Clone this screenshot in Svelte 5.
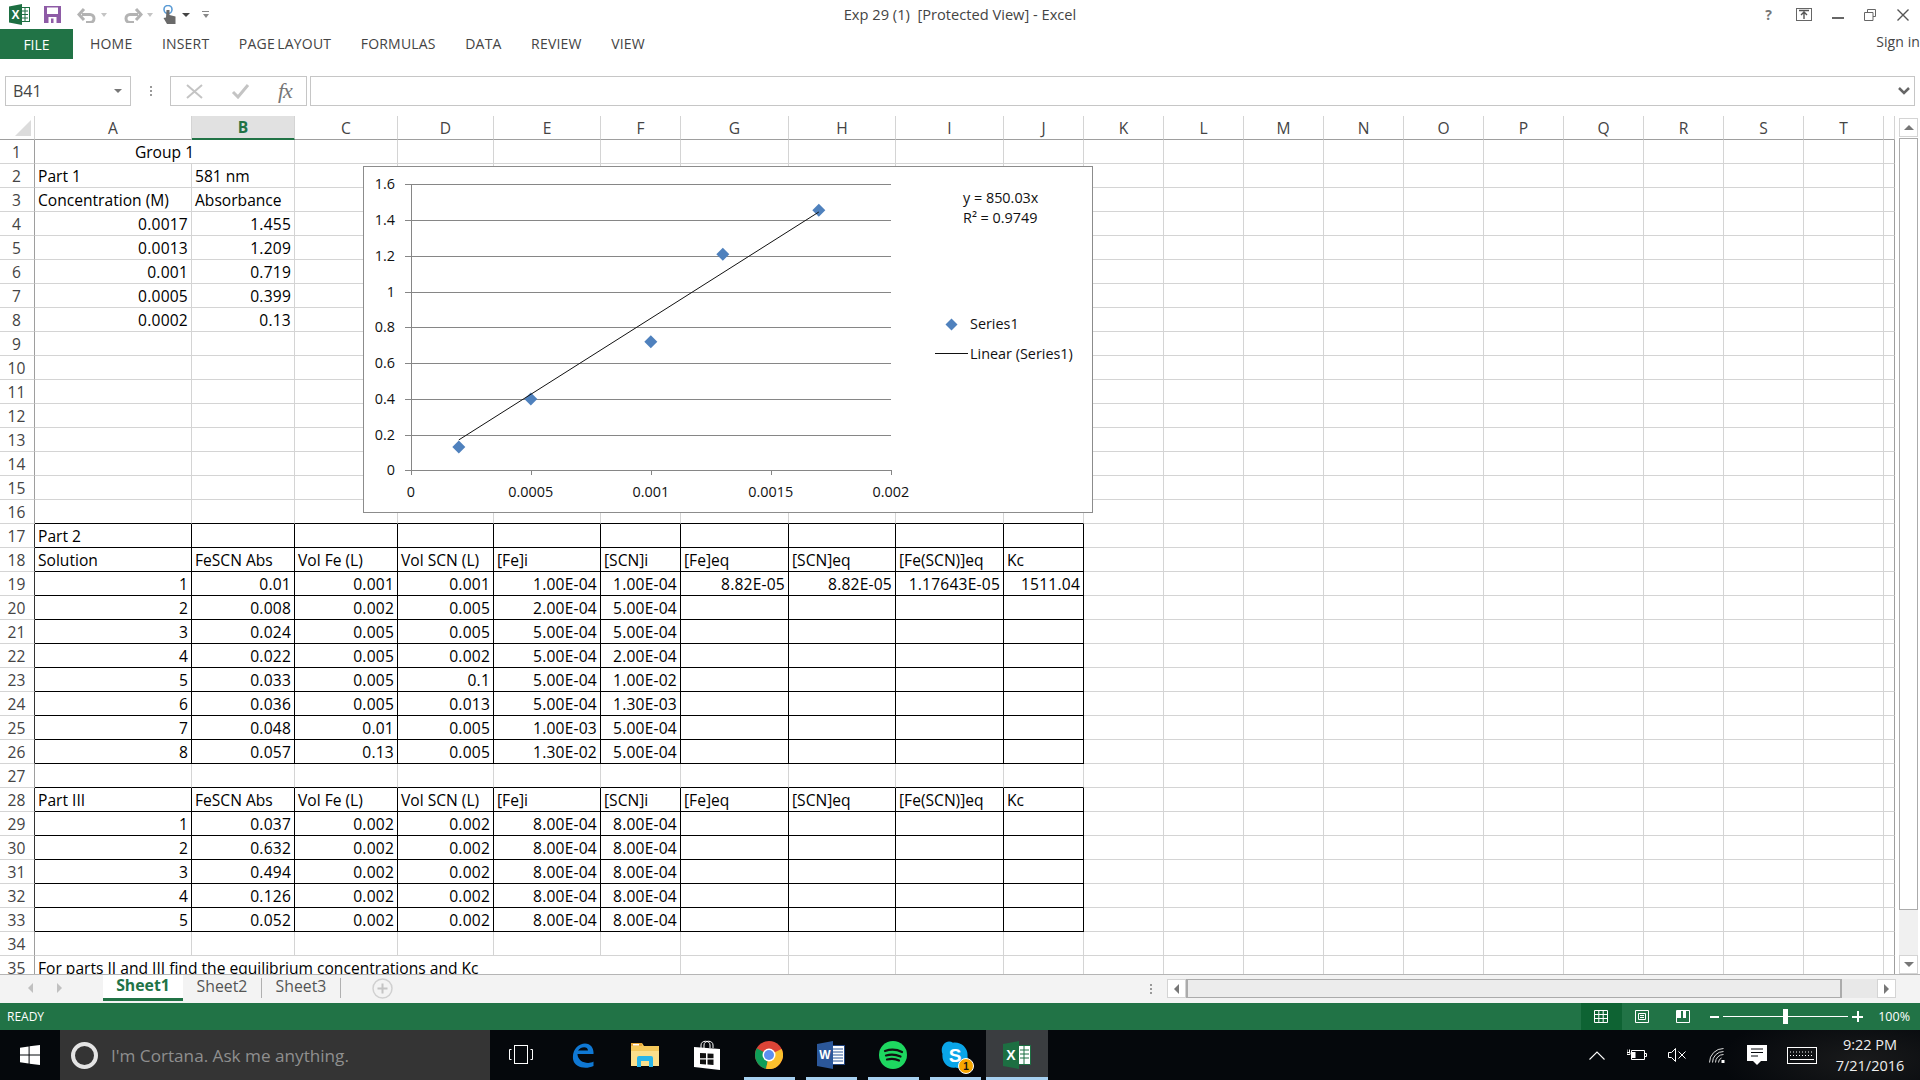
<script>
	const colWidths = [157, 103, 103, 96, 107, 80, 108, 107, 108, 80, 80, 80, 80, 80, 80, 80, 80, 80, 80, 80, 11];
	const letters = 'ABCDEFGHIJKLMNOPQRST'.split('').concat('');
	const gridCols = '35px ' + colWidths.map((w) => w + 'px').join(' ');

	const partHead = ['FeSCN Abs', 'Vol Fe (L)', 'Vol SCN (L)', '[Fe]i', '[SCN]i', '[Fe]eq', '[SCN]eq', '[Fe(SCN)]eq', 'Kc'];

	const data = {
		2: ['Part 1', '581 nm'],
		3: ['Concentration (M)', 'Absorbance'],
		4: ['0.0017', '1.455'],
		5: ['0.0013', '1.209'],
		6: ['0.001', '0.719'],
		7: ['0.0005', '0.399'],
		8: ['0.0002', '0.13'],
		17: ['Part 2'],
		18: ['Solution', ...partHead],
		19: ['1', '0.01', '0.001', '0.001', '1.00E-04', '1.00E-04', '8.82E-05', '8.82E-05', '1.17643E-05', '1511.04'],
		20: ['2', '0.008', '0.002', '0.005', '2.00E-04', '5.00E-04'],
		21: ['3', '0.024', '0.005', '0.005', '5.00E-04', '5.00E-04'],
		22: ['4', '0.022', '0.005', '0.002', '5.00E-04', '2.00E-04'],
		23: ['5', '0.033', '0.005', '0.1', '5.00E-04', '1.00E-02'],
		24: ['6', '0.036', '0.005', '0.013', '5.00E-04', '1.30E-03'],
		25: ['7', '0.048', '0.01', '0.005', '1.00E-03', '5.00E-04'],
		26: ['8', '0.057', '0.13', '0.005', '1.30E-02', '5.00E-04'],
		28: ['Part III', ...partHead],
		29: ['1', '0.037', '0.002', '0.002', '8.00E-04', '8.00E-04'],
		30: ['2', '0.632', '0.002', '0.002', '8.00E-04', '8.00E-04'],
		31: ['3', '0.494', '0.002', '0.002', '8.00E-04', '8.00E-04'],
		32: ['4', '0.126', '0.002', '0.002', '8.00E-04', '8.00E-04'],
		33: ['5', '0.052', '0.002', '0.002', '8.00E-04', '8.00E-04']
	};

	const rowNums = Array.from({ length: 35 }, (_, i) => i + 1);
	const isBoxedRow = (r) => (r >= 17 && r <= 26) || (r >= 28 && r <= 33);
	const isBoxTop = (r) => r === 16 || r === 27;
	const isNum = (t) => /^[\d.]+(E-\d+)?$/.test(t);

	function cellClass(r, c) {
		const t = (data[r] || [])[c] || '';
		let cls = 'cell';
		if (isNum(t)) cls += ' num';
		if (c < 10 && (isBoxedRow(r) || isBoxTop(r))) cls += isBoxedRow(r) ? ' boxed' : ' boxtop';
		if (c === colWidths.length - 1) cls += ' edge';
		return cls;
	}

	// chart helpers, page coordinates (the svg viewBox starts at the chart corner)
	const px = (x) => 410.8 + (x / 0.002) * 480;
	const py = (y) => 470.3 - (y / 1.6) * 286;
	const yTicks = ['0', '0.2', '0.4', '0.6', '0.8', '1', '1.2', '1.4', '1.6'];
	const xTicks = ['0', '0.0005', '0.001', '0.0015', '0.002'];
	const points = [
		[0.0017, 1.455],
		[0.0013, 1.209],
		[0.001, 0.719],
		[0.0005, 0.399],
		[0.0002, 0.13]
	];
	const diamond = (x, y, s = 6.5) => `${x},${y - s} ${x + s},${y} ${x},${y + s} ${x - s},${y}`;
</script>

<div class="app">
	<header class="titlebar">
		<div class="qat">
			<svg class="q-excel" width="21" height="21" viewBox="0 0 21 21">
				<rect x="11" y="3.5" width="9.5" height="14" fill="#fff" stroke="#1d6f42" />
				<path d="M13 7h6M13 10.5h6M13 14h6M16 4v13" stroke="#1d6f42" stroke-width="1" />
				<path d="M0 2.5 13 0v21L0 18.5z" fill="#1d6f42" />
				<text x="6.4" y="15" class="logo-letter" font-size="12">X</text>
			</svg>
			<svg class="q-save" width="17" height="17" viewBox="0 0 17 17">
				<path d="M0 0h17v17H0z" fill="#8e5ba6" />
				<rect x="3" y="1.5" width="11" height="6.5" fill="#fff" />
				<rect x="4.5" y="11" width="8" height="6" fill="#fff" />
				<rect x="7" y="12.5" width="2.5" height="4.5" fill="#8e5ba6" />
			</svg>
			<svg class="q-undo" width="20" height="16" viewBox="0 0 20 16">
				<path d="M5 7.5h8a4 4 0 0 1 0 8H9M7 2 2 7.5 7 13" fill="none" stroke="#b3b3b3" stroke-width="3" />
			</svg>
			<span class="caret small"></span>
			<svg class="q-redo" width="20" height="16" viewBox="0 0 20 16">
				<path d="M15 7.5H7a4 4 0 0 0 0 8h4M13 2l5 5.5-5 5.5" fill="none" stroke="#b3b3b3" stroke-width="3" />
			</svg>
			<span class="caret small"></span>
			<svg class="q-touch" width="14" height="19" viewBox="0 0 14 19">
				<circle cx="5" cy="4.5" r="4" fill="none" stroke="#5b9bd5" stroke-width="1.6" />
				<path d="M3.5 5h3v5l6 1.5V19H4l-3.500-6 2.500-.5z" fill="#6a6a6a" />
			</svg>
			<span class="caret dark"></span>
			<span class="customize"><i></i><span class="caret tiny"></span></span>
		</div>
		<div class="doc-title">Exp 29 (1)&nbsp; [Protected View] - Excel</div>
		<div class="winctl">
			<span class="help">?</span>
			<svg width="16" height="13" viewBox="0 0 16 13">
				<rect x=".5" y=".5" width="15" height="12" fill="none" stroke="#666" />
				<path d="M3 2.500h10M8 11V4.500M5 7l3-3 3 3" fill="none" stroke="#555" stroke-width="1.400" />
			</svg>
			<svg width="12" height="12" viewBox="0 0 12 12"><rect y="8" width="12" height="2" fill="#666" /></svg>
			<svg width="12" height="12" viewBox="0 0 12 12">
				<path d="M3.500 3V.5h8v7H9M.5 3.500h8.500v8H.5z" fill="#fff" stroke="#666" />
			</svg>
			<svg class="close" width="12" height="12" viewBox="0 0 12 12"><path d="M.5.5l11 11M11.500.5l-11 11" stroke="#555" stroke-width="1.400" /></svg>
		</div>
	</header>

	<nav class="ribbon">
		<div class="file">FILE</div>
		<div class="ribbon-tabs">
			{#each ['HOME', 'INSERT', 'PAGE LAYOUT', 'FORMULAS', 'DATA', 'REVIEW', 'VIEW'] as tab}
				<span>{tab}</span>
			{/each}
		</div>
		<div class="signin">Sign in</div>
	</nav>

	<div class="formula-bar">
		<div class="namebox"><span>B41</span><span class="caret"></span></div>
		<div class="dots"><i></i><i></i><i></i></div>
		<div class="fx-box">
			<svg width="17" height="15" viewBox="0 0 17 15"><path d="M1 1l15 13M16 1 1 14" stroke="#c4c4c4" stroke-width="2" /></svg>
			<svg width="19" height="15" viewBox="0 0 19 15"><path d="M2 8l5 5L17 1" fill="none" stroke="#c4c4c4" stroke-width="3" /></svg>
			<span class="fx">fx</span>
		</div>
		<div class="formula-input"><svg width="12" height="8" viewBox="0 0 12 8"><path d="M1 1l5 5 5-5" fill="none" stroke="#666" stroke-width="2.500" /></svg></div>
	</div>

	<div class="sheet-area">
		<div class="sheet" style="grid-template-columns: {gridCols}">
			<div class="corner"><i></i></div>
			{#each letters as l}
				<div class="colhead" class:selected={l === 'B'}>{l}</div>
			{/each}

			{#each rowNums as r}
				<div class="rownum" class:black={isBoxedRow(r)}>{r}</div>
				{#if r === 1}
					<div class="cell merged" style="grid-column: span 2">Group 1</div>
					{#each colWidths.slice(2) as _, i}
						<div class={cellClass(r, i + 2)}></div>
					{/each}
				{:else if r === 35}
					<div class="cell overflow" style="grid-column: span 5">For parts II and III find the equilibrium concentrations and Kc</div>
					{#each colWidths.slice(5) as _, i}
						<div class={cellClass(r, i + 5)}></div>
					{/each}
				{:else}
					{#each colWidths as _, c}
						<div class={cellClass(r, c)}>{(data[r] || [])[c] || ''}</div>
					{/each}
				{/if}
			{/each}

			<div class="chart">
				<svg width="730" height="347" viewBox="363 166 730 347">
					{#each yTicks as t, i}
						<line x1="405" x2="891" y1={Math.round(py(i * 0.2)) + 0.5} y2={Math.round(py(i * 0.2)) + 0.5} stroke="#868686" />
						<text x="395" y={py(i * 0.2) + 5} text-anchor="end" class="lbl">{t}</text>
					{/each}
					<line x1="411.500" x2="411.500" y1="184" y2="475" stroke="#868686" />
					{#each xTicks as t, i}
						<line x1={Math.round(px(i * 0.0005)) + 0.5} x2={Math.round(px(i * 0.0005)) + 0.5} y1="470" y2="475" stroke="#868686" />
						<text x={px(i * 0.0005)} y="497" text-anchor="middle" class="lbl">{t}</text>
					{/each}
					{#each points as [x, y]}
						<polygon points={diamond(px(x), py(y))} fill="#4f81bd" />
					{/each}
					<line x1={px(0.0002)} y1={py(0.17)} x2={px(0.0017)} y2={py(1.445)} stroke="#111" stroke-width="1" />
					<text x="963" y="203" class="lbl">y = 850.03x</text>
					<text x="963" y="223" class="lbl">R² = 0.9749</text>
					<polygon points={diamond(951.500, 324.500, 6)} fill="#4f81bd" />
					<text x="970" y="329" class="lbl">Series1</text>
					<line x1="935" x2="968" y1="353.500" y2="353.500" stroke="#111" />
					<text x="970" y="359" class="lbl">Linear (Series1)</text>
				</svg>
			</div>
		</div>

		<div class="vscroll">
			<div class="sbtn"><span class="tri up"></span></div>
			<div class="vthumb"></div>
			<div class="vtrack"></div>
			<div class="sbtn"><span class="tri down"></span></div>
		</div>
	</div>

	<div class="tabs-bar">
		<div class="tab-nav"><span class="tri left"></span><span class="tri right"></span></div>
		<div class="tab active">Sheet1</div>
		<div class="tab">Sheet2</div>
		<div class="tab">Sheet3</div>
		<div class="add">
			<svg width="21" height="21" viewBox="0 0 21 21">
				<circle cx="10.500" cy="10.500" r="9.500" fill="none" stroke="#d0d0d0" stroke-width="1.500" />
				<path d="M10.500 5.500v10M5.500 10.500h10" stroke="#c4c4c4" stroke-width="2" />
			</svg>
		</div>
		<div class="split-dots"><i></i><i></i><i></i></div>
		<div class="hscroll">
			<div class="sbtn"><span class="tri left dark"></span></div>
			<div class="hthumb"></div>
			<div class="htrack"></div>
			<div class="sbtn"><span class="tri right dark"></span></div>
		</div>
	</div>

	<div class="statusbar">
		<span class="ready">READY</span>
		<div class="status-right">
			<div class="view on">
				<svg width="14" height="13" viewBox="0 0 14 13"><path d="M.5.500h13v12H.5zM.5 4.500h13M.5 8.500h13M4.800.5v12M9.200.5v12" fill="none" stroke="#fff" /></svg>
			</div>
			<div class="view">
				<svg width="14" height="13" viewBox="0 0 14 13"><path d="M.5.500h13v12H.5z" fill="none" stroke="#fff" /><path d="M3.500 3.500h7v6h-7zM5 5.500h4M5 7.500h4" fill="none" stroke="#fff" /></svg>
			</div>
			<div class="view">
				<svg width="14" height="13" viewBox="0 0 14 13"><path d="M.5.500h13v12H.5z" fill="none" stroke="#fff" /><rect x="1" y="1" width="4" height="7" fill="#fff" /><rect x="7" y="1" width="3" height="7" fill="#fff" /></svg>
			</div>
			<div class="zoom">
				<span class="zbtn"><i></i></span>
				<div class="zline"><b></b></div>
				<span class="zbtn plus"><i></i></span>
			</div>
			<span class="pct">100%</span>
		</div>
	</div>

	<footer class="taskbar">
		<div class="start">
			<svg width="20" height="20" viewBox="0 0 20 20"><path d="M0 2.800 8.600 1.500v8H0zM9.600 1.300 20 0v9.500H9.600zM0 10.500h8.600v8L0 17.200zM9.600 10.500H20V20L9.600 18.700z" fill="#fff" /></svg>
		</div>
		<div class="cortana">
			<span class="ring"></span>
			<span>I'm Cortana. Ask me anything.</span>
		</div>
		<div class="slot">
			<svg width="24" height="20" viewBox="0 0 24 20"><rect x="5.500" y=".5" width="13" height="18" fill="none" stroke="#fff" /><path d="M2.500 4.500H.5v10h2M21.500 4.500h2v10h-2" fill="none" stroke="#fff" /></svg>
		</div>
		<div class="slot">
			<svg width="25" height="28" viewBox="0 0 25 28">
				<path d="M2 18C1 8 8 2.500 14 2.500c6 0 9 5 8.500 10.500H6.500C6.500 21 17 24 22.500 20.500V25C14 29 3 26 2 18zM7 9.500h10C17 5 10 5 7 9.500z" fill="#0f78d4" />
			</svg>
		</div>
		<div class="slot">
			<svg width="28" height="24" viewBox="0 0 28 24">
				<path d="M0 0h11l2 3h15v20H0z" fill="#f5c95c" />
				<path d="M0 0h11v3H0z" fill="#e8a93a" />
				<rect x="2" y="1" width="6" height="1.500" fill="#fff" />
				<path d="M0 8h28v15H0z" fill="#fbe08c" />
				<path d="M6 24V15q0-2 2-2h12q2 0 2 2v9h-4v-6H10v6z" fill="#29b6ea" />
			</svg>
		</div>
		<div class="slot">
			<svg width="26" height="30" viewBox="0 0 26 30">
				<path d="M7 8V5c0-5 9-5 9 0v3M10 8V5c0-5 9-5 9 0v3" fill="none" stroke="#fff" stroke-width="1" />
				<path d="M0 7l26 2v21L0 27z" fill="#fff" />
				<path d="M6 13l6 .3v5H6zM13.500 13.400l6 .3v4.600h-6zM6 19.500h6v5L6 24zM13.500 19.500h6v5.500l-6-.5z" fill="#111" />
			</svg>
		</div>
		<div class="slot running">
			<svg width="28" height="28" viewBox="0 0 28 28">
				<circle cx="14" cy="14" r="14" fill="#db4437" />
				<path d="M14 14 1.800 7.200A14 14 0 0 0 11 27.700z" fill="#0f9d58" />
				<path d="M14 14 26.600 8A14 14 0 0 1 11 27.700z" fill="#fbc02d" />
				<circle cx="14" cy="14" r="6.500" fill="#fff" />
				<circle cx="14" cy="14" r="5" fill="#5d8ff0" />
			</svg>
		</div>
		<div class="slot running">
			<svg width="28" height="28" viewBox="0 0 28 28">
				<rect x="11" y="4.500" width="16.500" height="19" fill="#fff" stroke="#23457f" />
				<path d="M16 8h10M16 11h10M16 14h10M16 17h10M16 20h10" stroke="#2b579a" />
				<path d="M0 3 16 0v28L0 25z" fill="#2b579a" />
				<text x="7.800" y="18" class="logo-letter" font-size="12">W</text>
			</svg>
		</div>
		<div class="slot running">
			<svg width="28" height="28" viewBox="0 0 28 28">
				<circle cx="14" cy="14" r="14" fill="#1ed760" />
				<path d="M6 10c6-2 12-1.500 17 1M7 14.500c5-1.500 10-1 14.500 1M8 18.500c4-1 8.500-.8 12 1" fill="none" stroke="#111" stroke-width="2.200" stroke-linecap="round" />
			</svg>
		</div>
		<div class="slot running">
			<div class="skype">
				<svg width="28" height="28" viewBox="0 0 28 28">
					<path d="M8 .5a7.500 7.500 0 0 1 4 1.200C20 .5 27.500 7 26.500 15.500 28.500 22 22 29 14.500 26.500 7 28 .5 21 1.500 13 -1 7 3 .5 8 .5z" fill="#0aa5e8" />
					<text x="14" y="21" class="logo-letter" font-size="19" font-weight="700">S</text>
				</svg>
				<span class="badge">1</span>
			</div>
		</div>
		<div class="slot excel-on">
			<svg width="28" height="28" viewBox="0 0 28 28">
				<rect x="15" y="4.500" width="12.500" height="19" fill="#fff" stroke="#1d6f42" />
				<path d="M17 9h9M17 13h9M17 17h9M21 5v18" stroke="#1d6f42" />
				<path d="M0 3 16 0v28L0 25z" fill="#1d6f42" />
				<text x="8" y="19" class="logo-letter" font-size="14">X</text>
			</svg>
		</div>
		<div class="tray">
			<div class="tslot">
				<svg width="16" height="9" viewBox="0 0 16 9"><path d="M.5 8.500 8 1l7.500 7.500" fill="none" stroke="#fff" stroke-width="1.100" /></svg>
			</div>
			<div class="tslot">
				<svg width="20" height="12" viewBox="0 0 20 12">
					<path d="M4.500 1.500h13v9h-13zM17.500 4.500h2v3h-2" fill="none" stroke="#fff" />
					<rect x="5" y="3" width="3.500" height="6" fill="#fff" />
					<path d="M0 .5v3M2.500.5v3M0 3.500h3v2H0z" stroke="#fff" />
				</svg>
			</div>
			<div class="tslot">
				<svg width="18" height="14" viewBox="0 0 18 14"><path d="M.5 4.500h3l4-4v13l-4-4h-3zM10.500 3.500l7 7M17.500 3.500l-7 7" fill="none" stroke="#fff" /></svg>
			</div>
			<div class="tslot">
				<svg width="16" height="15" viewBox="0 0 16 15">
					<path d="M.5 14.500A14 14 0 0 1 14.500.5M3.500 14.500A11 11 0 0 1 14.500 3.500M6.500 14.500a8 8 0 0 1 8-8M9.500 14.500a5 5 0 0 1 3-4.500" fill="none" stroke="#ddd" stroke-width="1" />
					<rect x="12.500" y="12" width="3" height="3" fill="#fff" />
				</svg>
			</div>
			<div class="tslot">
				<svg width="20" height="20" viewBox="0 0 20 20">
					<path d="M0 0h20v16h-6l-4 4-4-4H0z" fill="#fff" />
					<path d="M4 4h12M4 7.500h12M4 11h7" stroke="#05080c" stroke-width="1" />
				</svg>
			</div>
			<div class="tslot wide">
				<svg width="30" height="17" viewBox="0 0 30 17">
					<rect x=".5" y=".5" width="29" height="16" fill="none" stroke="#fff" />
					<path d="M3 5h24M3 8.500h24" stroke="#fff" stroke-dasharray="1 2" />
					<path d="M3 12.500h24" stroke="#fff" />
				</svg>
			</div>
			<div class="clock"><span>9:22 PM</span><span>7/21/2016</span></div>
		</div>
	</footer>
</div>

<style>
	:global(body) {
		margin: 0;
		background: #fff;
	}

	.app {
		width: 1920px;
		height: 1080px;
		display: flex;
		flex-direction: column;
		overflow: hidden;
		font-family: 'Open Sans', 'Liberation Sans', sans-serif;
		color: #444;
		background: #fff;
	}

	/* title row */
	.titlebar {
		height: 29px;
		flex: none;
		display: grid;
		grid-template-columns: 1fr auto 1fr;
		align-items: center;
	}

	.qat {
		display: flex;
		align-items: center;
		padding-left: 9px;
	}

	.q-save {
		margin-left: 14px;
	}

	.q-undo {
		margin-left: 16px;
	}

	.q-redo {
		margin-left: 16px;
	}

	.q-touch {
		margin-left: 10px;
	}

	.caret {
		width: 0;
		height: 0;
		display: inline-block;
		border-left: 4px solid transparent;
		border-right: 4px solid transparent;
		border-top: 4px solid #777;
	}

	.caret.small {
		margin-left: 4px;
		border-top-color: #c4c4c4;
		border-left-width: 3.5px;
		border-right-width: 3.5px;
	}

	.caret.dark {
		margin-left: 5px;
		border-top-color: #444;
	}

	.customize {
		margin-left: 12px;
		display: flex;
		flex-direction: column;
		gap: 2px;
		align-items: center;
	}

	.customize i {
		width: 7px;
		height: 1px;
		background: #888;
	}

	.caret.tiny {
		border-left-width: 3px;
		border-right-width: 3px;
		border-top-color: #888;
	}

	.doc-title {
		font-size: 14.650px;
		color: #444;
		padding-bottom: 2px;
	}

	.winctl {
		display: flex;
		align-items: center;
		justify-content: flex-end;
		padding-right: 11px;
		gap: 20px;
	}

	.winctl .close {
		margin-left: 1px;
	}

	.help {
		font-weight: 700;
		font-size: 14px;
		color: #777;
		margin-right: 4px;
	}

	/* ribbon */
	.ribbon {
		height: 30px;
		flex: none;
		display: flex;
		align-items: center;
		font-size: 14px;
	}

	.file {
		width: 73px;
		height: 30px;
		background: #217346;
		color: #fff;
		display: flex;
		align-items: center;
		justify-content: center;
	}

	.ribbon-tabs {
		display: flex;
		gap: 29.500px;
		margin-left: 17px;
		margin-top: -2px;
		letter-spacing: 0.2px;
		word-spacing: -1.500px;
		color: #444;
	}

	.signin {
		margin-left: auto;
		margin-top: -5px;
		letter-spacing: 0.1px;
	}

	/* formula bar */
	.formula-bar {
		height: 30px;
		margin-top: 17px;
		flex: none;
		display: flex;
		align-items: stretch;
		padding-left: 5px;
		padding-right: 5px;
	}

	.namebox {
		width: 126px;
		border: 1px solid #c6c6c6;
		display: flex;
		align-items: center;
		justify-content: space-between;
		padding: 0 8px 0 7px;
		font-size: 16px;
		box-sizing: border-box;
	}

	.dots {
		width: 39px;
		display: flex;
		flex-direction: column;
		align-items: center;
		justify-content: center;
		gap: 2px;
	}

	.dots i,
	.split-dots i {
		width: 2px;
		height: 2px;
		background: #999;
	}

	.fx-box {
		width: 137px;
		box-sizing: border-box;
		border: 1px solid #c6c6c6;
		display: flex;
		align-items: center;
		padding-left: 15px;
		gap: 28px;
	}

	.fx {
		font-family: 'Liberation Serif', serif;
		font-style: italic;
		font-size: 22px;
		color: #777;
		letter-spacing: -1px;
	}

	.formula-input {
		flex: 1;
		margin-left: 3px;
		border: 1px solid #c6c6c6;
		display: flex;
		align-items: center;
		justify-content: flex-end;
		padding-right: 4px;
	}

	/* sheet */
	.sheet-area {
		margin-top: 10px;
		height: 858px;
		flex: none;
		display: flex;
		overflow: hidden;
	}

	.sheet {
		position: relative;
		display: grid;
		grid-auto-rows: 24px;
		width: 1895px;
		font-size: 15.600px;
		color: #000;
		align-content: start;
	}

	.corner {
		position: relative;
		box-sizing: border-box;
		border-right: 1px solid #d4d4d4;
		border-bottom: 1px solid #9e9e9e;
	}

	.corner i {
		position: absolute;
		right: 3px;
		bottom: 3px;
		width: 0;
		height: 0;
		border-left: 16px solid transparent;
		border-bottom: 16px solid #dcdcdc;
	}

	.colhead {
		box-sizing: border-box;
		display: flex;
		align-items: center;
		justify-content: center;
		border-right: 1px solid #d4d4d4;
		border-bottom: 1px solid #9e9e9e;
		color: #444;
	}

	.colhead.selected {
		background: #e1e1e1;
		color: #217346;
		font-weight: 700;
		border-bottom: 2px solid #217346;
	}

	.rownum {
		box-sizing: border-box;
		display: flex;
		align-items: center;
		justify-content: center;
		padding-right: 1px;
		border-right: 1px solid #9e9e9e;
		border-bottom: 1px solid #d4d4d4;
		color: #444;
	}

	.rownum.black {
		border-right-color: #333;
	}

	.cell {
		box-sizing: border-box;
		border-right: 1px solid #d4d4d4;
		border-bottom: 1px solid #d4d4d4;
		padding: 0 3px;
		line-height: 25px;
		white-space: nowrap;
		overflow: hidden;
		color: #000;
	}

	.cell.edge {
		border-right-color: #9e9e9e;
	}

	.cell.num {
		text-align: right;
		letter-spacing: 0.2px;
	}

	.cell.merged {
		text-align: center;
	}

	.cell.boxed {
		border-right-color: #000;
		border-bottom-color: #000;
	}

	.cell.boxtop {
		border-bottom-color: #000;
	}

	.cell.overflow {
		border-right: none;
	}

	.chart {
		position: absolute;
		left: 363px;
		top: 50px;
		width: 730px;
		height: 347px;
		box-sizing: border-box;
		background: #fff;
		border: 1px solid #8c8c8c;
		overflow: hidden;
	}

	.chart svg {
		display: block;
		margin: -1px;
	}

	.lbl {
		font-size: 14.400px;
		fill: #111;
	}

	/* scrollbars */
	.vscroll {
		width: 19px;
		margin-left: 4px;
		display: flex;
		flex-direction: column;
		padding-top: 2px;
	}

	.sbtn {
		width: 19px;
		height: 19px;
		flex: none;
		box-sizing: border-box;
		border: 1px solid #d4d4d4;
		display: flex;
		align-items: center;
		justify-content: center;
		background: #fff;
	}

	.tri {
		width: 0;
		height: 0;
		display: block;
	}

	.tri.up {
		border-left: 5px solid transparent;
		border-right: 5px solid transparent;
		border-bottom: 5px solid #777;
	}

	.tri.down {
		border-left: 5px solid transparent;
		border-right: 5px solid transparent;
		border-top: 5px solid #777;
	}

	.tri.left {
		border-top: 5px solid transparent;
		border-bottom: 5px solid transparent;
		border-right: 5px solid #c0c0c0;
	}

	.tri.right {
		border-top: 5px solid transparent;
		border-bottom: 5px solid transparent;
		border-left: 5px solid #c0c0c0;
	}

	.tri.left.dark {
		border-right-color: #777;
	}

	.tri.right.dark {
		border-left-color: #777;
	}

	.vthumb {
		height: 772px;
		margin-top: 1px;
		flex: none;
		box-sizing: border-box;
		background: #fff;
		border: 1px solid #ababab;
	}

	.vtrack {
		flex: 1;
		background: #f0f0f0;
	}

	/* sheet tabs */
	.tabs-bar {
		height: 29px;
		flex: none;
		display: flex;
		align-items: flex-start;
		background: #f3f3f3;
		border-top: 1px solid #b5b5b5;
		box-sizing: border-box;
		font-size: 15.800px;
		color: #555;
	}

	.tab-nav {
		width: 103px;
		height: 26px;
		display: flex;
		align-items: center;
		gap: 24px;
		padding-left: 28px;
		box-sizing: border-box;
	}

	.tab {
		width: 79px;
		height: 20px;
		padding-bottom: 4px;
		display: flex;
		align-items: center;
		justify-content: center;
		box-sizing: border-box;
		border-right: 1px solid #b0b0b0;
		margin: 3px 0 0;
	}

	.tab.active {
		width: 80px;
		height: 26px;
		padding-bottom: 3px;
		margin: 0;
		background: #fff;
		border-right: none;
		border-bottom: 3px solid #217346;
		color: #217346;
		font-weight: 700;
	}

	.add {
		margin: 3px 0 0 31px;
		height: 21px;
	}

	.split-dots {
		margin: 9px 0 0 757px;
		display: flex;
		flex-direction: column;
		gap: 2px;
	}

	.hscroll {
		margin: 4px 0 0 15px;
		width: 729px;
		display: flex;
	}

	.hthumb {
		width: 656px;
		height: 19px;
		box-sizing: border-box;
		background: #ececec;
		border: 2px solid #ababab;
		border-width: 1px 2px 1px 2px;
	}

	.htrack {
		flex: 1;
		background: #e8e8e8;
		height: 19px;
	}

	/* status */
	.statusbar {
		height: 27px;
		flex: none;
		background: #217346;
		color: #fff;
		display: flex;
		align-items: center;
		font-size: 12px;
	}

	.ready {
		padding-left: 7px;
	}

	.status-right {
		margin-left: auto;
		height: 100%;
		display: flex;
		align-items: center;
		padding-right: 10px;
	}

	.view {
		width: 41px;
		height: 100%;
		display: flex;
		align-items: center;
		justify-content: center;
	}

	.view.on {
		background: #0e6333;
	}

	.zoom {
		display: flex;
		align-items: center;
		margin-left: 6px;
		width: 153.500px;
	}

	.zbtn {
		width: 9px;
		height: 9px;
		position: relative;
		flex: none;
	}

	.zbtn i {
		position: absolute;
		left: 0;
		right: 0;
		top: 3.500px;
		height: 2px;
		background: #fff;
	}

	.zbtn.plus {
		width: 11px;
		height: 11px;
	}

	.zbtn.plus i {
		top: 4.500px;
	}

	.zbtn.plus::after {
		content: '';
		position: absolute;
		top: 0;
		bottom: 0;
		left: 4.500px;
		width: 2px;
		background: #fff;
	}

	.zline {
		flex: 1;
		height: 1px;
		margin: 0 4px;
		background: #fff;
		position: relative;
	}

	.zline b {
		position: absolute;
		left: 60px;
		top: -7px;
		width: 5px;
		height: 15px;
		background: #fff;
	}

	.pct {
		margin-left: 15px;
		font-size: 12.500px;
	}

	/* taskbar */
	.taskbar {
		height: 50px;
		flex: none;
		background: #05080c radial-gradient(ellipse 140px 50px at 1860px 30px, #191a1b, transparent);
		display: flex;
		align-items: stretch;
		color: #fff;
	}

	.start {
		width: 60px;
		display: flex;
		align-items: center;
		justify-content: center;
	}

	.cortana {
		width: 430px;
		background: #343434;
		display: flex;
		align-items: center;
		color: #8f8f8f;
		font-size: 17.150px;
		gap: 13px;
		padding-left: 11px;
		box-sizing: border-box;
	}

	.ring {
		width: 27px;
		height: 27px;
		box-sizing: border-box;
		border: 4px solid #e4e4e4;
		border-radius: 50%;
		flex: none;
	}

	.slot {
		width: 62px;
		display: flex;
		align-items: center;
		justify-content: center;
	}

	.slot.running {
		background: linear-gradient(#a6d0f0, #a6d0f0) center bottom / 51px 3px no-repeat;
	}

	.slot.excel-on {
		background: #a6d0f0 linear-gradient(#3a3d40, #3a3d40) top / 100% 47px no-repeat;
	}

	.logo-letter {
		font-family: 'Liberation Sans', sans-serif;
		font-weight: 700;
		fill: #fff;
		text-anchor: middle;
	}

	.skype {
		position: relative;
		width: 28px;
		height: 28px;
	}

	.badge {
		position: absolute;
		right: -5px;
		bottom: -5px;
		width: 14px;
		height: 14px;
		border-radius: 50%;
		background: #f7a600;
		border: 1px solid #fff;
		color: #111;
		font: 700 10px 'Liberation Sans', sans-serif;
		display: flex;
		align-items: center;
		justify-content: center;
	}

	.tray {
		margin-left: auto;
		display: flex;
		align-items: center;
		padding-right: 7px;
	}

	.tslot {
		width: 40px;
		display: flex;
		justify-content: center;
	}

	.tslot.wide {
		width: 50px;
	}

	.clock {
		width: 86px;
		display: flex;
		flex-direction: column;
		align-items: center;
		gap: 3px;
		font-size: 14.500px;
		line-height: 18px;
		color: #eee;
	}
</style>
